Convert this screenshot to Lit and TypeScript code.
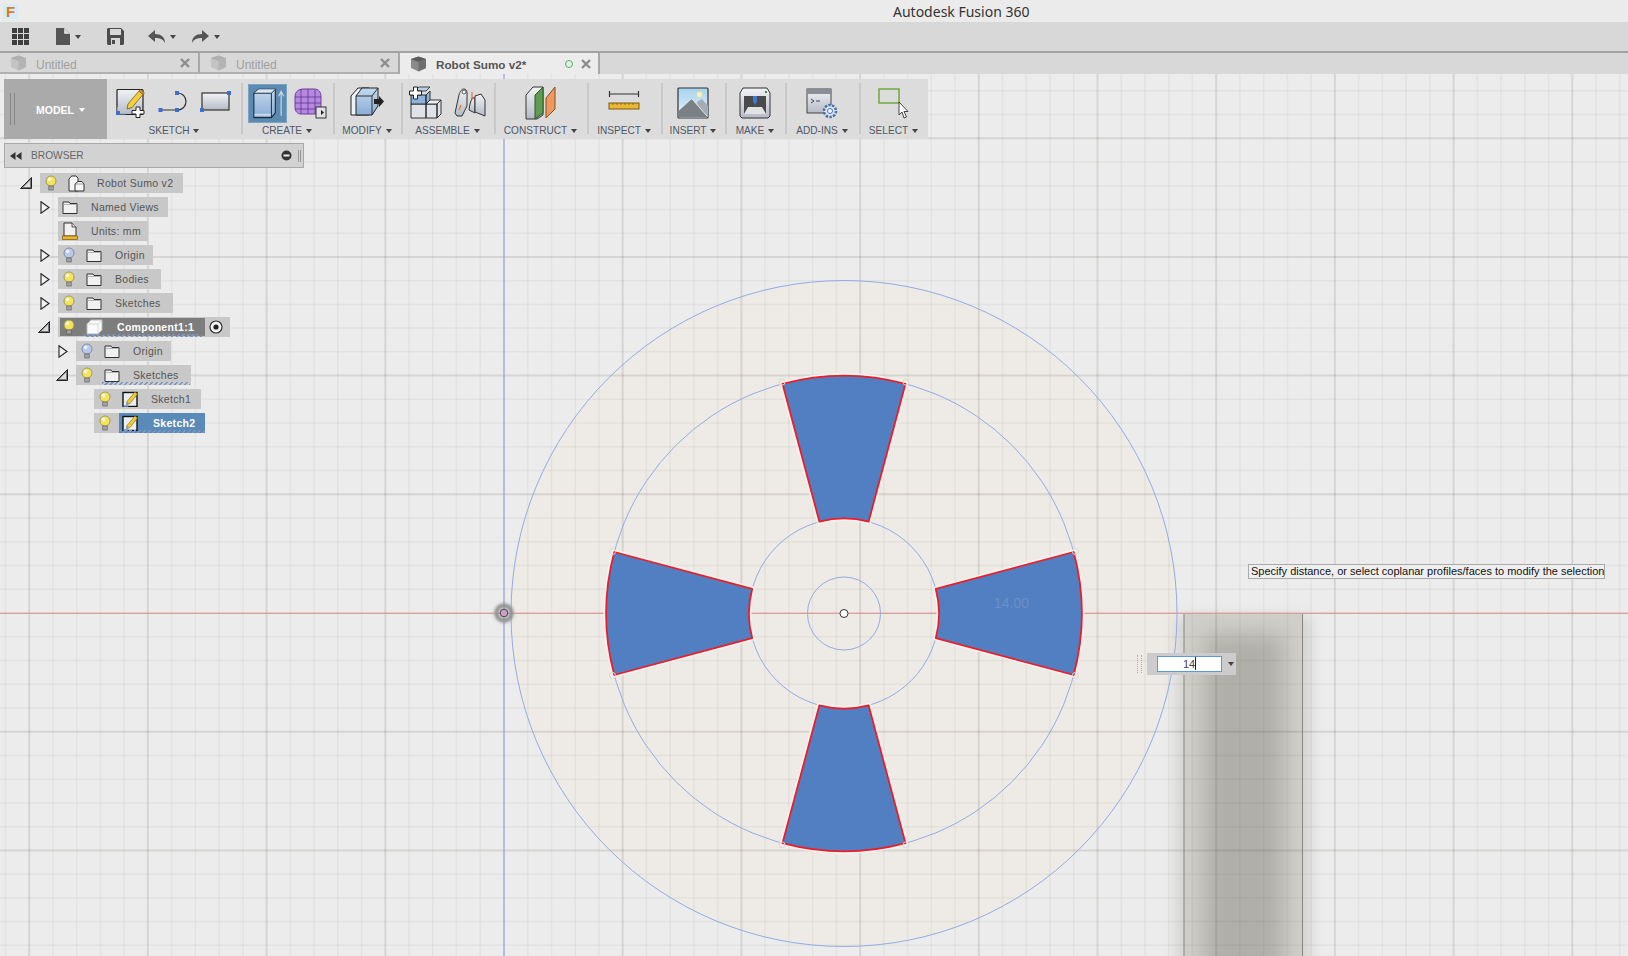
import { LitElement, css, html, svg } from 'lit';
import { customElement } from 'lit/decorators.js';

const CX = 844;
const CY = 613.5;
const STEP = 23.74;

// sector of the ring between the two sketch circles, opening 30deg, pointing up
const sector = 'M-61.5 -229.7 A237.8 237.8 0 0 1 61.5 -229.7 L24.6 -91.8 A95 95 0 0 0 -24.6 -91.8 Z';

const gridLines = () => {
  const out = [];
  for (let i = -21; i < 48; i++) {
    const x = 504 + i * STEP;
    const major = i % 5 === 0;
    out.push(svg`<line class=${major ? 'maj' : 'min'} x1=${x} x2=${x} y1="74" y2="956"></line>`);
  }
  for (let i = -23; i < 15; i++) {
    const y = 613 + i * STEP;
    const major = i % 5 === 0;
    out.push(svg`<line class=${major ? 'maj' : 'min'} x1="0" x2="1628" y1=${y} y2=${y}></line>`);
  }
  return out;
};

const caret = html`<span class="caret"></span>`;

const bulb = (on: boolean) => html`<svg class="bulb" width="12" height="17" viewBox="0 0 12 17">
  <circle cx="6" cy="6" r="5" fill=${on ? '#f7e35a' : '#b9c9ee'} stroke=${on ? '#8f8a55' : '#6f7d9e'} stroke-width="0.8"></circle>
  <circle cx="4.6" cy="4.4" r="1.8" fill="#fff" opacity=".75"></circle>
  <rect x="3.8" y="11" width="4.4" height="4" fill="#a4a4a4" stroke="#555" stroke-width=".6"></rect>
</svg>`;

const folder = html`<svg class="ic" width="16" height="15" viewBox="0 0 16 15">
  <path d="M1 13.500V2h6l1 1.500h7v10Z" fill="#f1f1f1" stroke="#333" stroke-width="1"></path>
  <path d="M1 4.500h14" stroke="#999" stroke-width=".7"></path>
</svg>`;

const units = html`<svg class="ic" width="16" height="18" viewBox="0 0 16 18">
  <path d="M2 14V1h8l4 4v9Z" fill="#f1f1f1" stroke="#333"></path>
  <path d="M10 1v4h4" fill="#ddd" stroke="#333" stroke-width=".8"></path>
  <rect x="0.5" y="14" width="15" height="3.500" fill="#e9b52b" stroke="#8a6510" stroke-width=".8"></rect>
</svg>`;

const assembly = html`<svg class="ic" width="17" height="17" viewBox="0 0 17 17">
  <path d="M1 16V4L3.500 1H8L10 3V16Z" fill="#f6f6f6" stroke="#333"></path>
  <path d="M7 16V9L10 6.500H14L16 9V16Z" fill="#f6f6f6" stroke="#333"></path>
  <path d="M7 9H16" stroke="#777" stroke-width=".7"></path>
</svg>`;

const part = html`<svg class="ic" width="17" height="16" viewBox="0 0 17 16">
  <path d="M1 15V5l4-4h11v10l-4 4Z" fill="#fafafa" stroke="#bbb"></path>
  <path d="M1 5h11v10M12 5l4-4" fill="none" stroke="#ccc" stroke-width=".8"></path>
</svg>`;

const sketchIc = html`<svg class="ic" width="17" height="16" viewBox="0 0 17 16">
  <rect x="1" y="1.500" width="14" height="14" fill="#e8edf5" stroke="#111" stroke-width="1.400"></rect>
  <path d="M5 10.500 13 1l2.500 2L8 12.500l-3.500 1Z" fill="#f2c92e" stroke="#7a6414" stroke-width=".6"></path>
  <path d="M1.500 15h4v-4" fill="none" stroke="#6fa3dc" stroke-width="1.400"></path>
</svg>`;

const radio = html`<svg class="radio" width="14" height="14" viewBox="0 0 14 14">
  <circle cx="7" cy="7" r="6" fill="#f4f4f4" stroke="#333" stroke-width="1.200"></circle>
  <circle cx="7" cy="7" r="2.600" fill="#222"></circle>
</svg>`;

interface Row {
  depth: number;
  twist?: 'open' | 'closed';
  light?: 'on' | 'off';
  icon: unknown;
  label: string;
  kind?: 'active' | 'selected';
  hatch?: boolean;
  width: number;
}

const rows: Row[] = [
  { depth: 0, twist: 'open', light: 'on', icon: assembly, label: 'Robot Sumo v2', width: 143 },
  { depth: 1, twist: 'closed', icon: folder, label: 'Named Views', width: 110 },
  { depth: 1, icon: units, label: 'Units: mm', width: 90 },
  { depth: 1, twist: 'closed', light: 'off', icon: folder, label: 'Origin', width: 95 },
  { depth: 1, twist: 'closed', light: 'on', icon: folder, label: 'Bodies', width: 103 },
  { depth: 1, twist: 'closed', light: 'on', icon: folder, label: 'Sketches', width: 115 },
  { depth: 1, twist: 'open', light: 'on', icon: part, label: 'Component1:1', kind: 'active', width: 172 },
  { depth: 2, twist: 'closed', light: 'off', icon: folder, label: 'Origin', width: 95 },
  { depth: 2, twist: 'open', light: 'on', icon: folder, label: 'Sketches', hatch: true, width: 115 },
  { depth: 3, light: 'on', icon: sketchIc, label: 'Sketch1', width: 107 },
  { depth: 3, light: 'on', icon: sketchIc, label: 'Sketch2', kind: 'selected', width: 111 },
];

const sketchNew = html`<svg width="34" height="32" viewBox="0 0 34 32">
  <rect x="2" y="2.500" width="26" height="25" rx="1" fill="url(#sheet)" stroke="#222" stroke-width="1.200"></rect>
  <path d="M13 17 24 4l4 3.500-11 13-5 1.500Z" fill="#f4cf3c" stroke="#6e5a12" stroke-width=".8"></path>
  <path d="M24 4l1.500-1.500 4 3.500L28 7.500Z" fill="#e98d3a" stroke="#6e5a12" stroke-width=".6"></path>
  <path d="M2.500 27h8M2.500 27v-7" stroke="#7aa5dc" stroke-width="1"></path>
  <rect x="1" y="24" width="4" height="4" fill="#3f6fc9"></rect>
  <path d="M21 20h4v3.500h4V27h-4v3.500h-4V27h-4v-3.500h4Z" fill="#fff" stroke="#222"></path>
</svg>`;

const sketchLine = html`<svg width="34" height="32" viewBox="0 0 34 32">
  <path d="M4 23H20M20 6C32 6 32 23 20 23" fill="none" stroke="#333" stroke-width="1.200"></path>
  <rect x="1.500" y="21" width="4" height="4" fill="#3b6fd0"></rect>
  <rect x="18" y="21" width="4" height="4" fill="#3b6fd0"></rect>
  <rect x="18" y="4" width="4" height="4" fill="#3b6fd0"></rect>
</svg>`;

const sketchRect = html`<svg width="34" height="32" viewBox="0 0 34 32">
  <rect x="3" y="6" width="27" height="17" fill="url(#sheet)" stroke="#333" stroke-width="1.200"></rect>
  <rect x="28" y="4" width="4" height="4" fill="#3b6fd0"></rect>
  <rect x="1" y="21" width="4" height="4" fill="#3b6fd0"></rect>
</svg>`;

const boxExtrude = html`<svg width="38" height="38" viewBox="0 0 38 38">
  <path d="M5 9 10 5H27V29L23 34H5Z" fill="url(#face)" stroke="#1d2a3a" stroke-width="1.100"></path>
  <path d="M5 9 10 5H27L23 9Z" fill="#d8e6f4"></path>
  <path d="M5 9H23V34M23 9 27 5" fill="none" stroke="#1d2a3a" stroke-width="1"></path>
  <path d="M5.500 31H22.500" stroke="#fff" stroke-width="1.600" opacity=".6"></path>
  <path d="M33 32V8M30.500 12 33 7l2.500 5" fill="none" stroke="#cfd8e2" stroke-width="1.200"></path>
</svg>`;

const meshBox = html`<svg width="34" height="34" viewBox="0 0 34 34">
  <path d="M2 11C2 5 6 3 11 3H21C26 3 28 6 28 11V23C28 26 25 28 21 28H8C4 28 2 25 2 21Z" fill="#b688e0" stroke="#6b3f9e" stroke-width="1"></path>
  <path d="M8 3V28M15 3V28M22 4V28M2 11H28M2 17H28M2 23H28" stroke="#5e358e" stroke-width=".8" fill="none"></path>
  <rect x="23" y="21" width="10" height="11" fill="#e2e2e2" stroke="#333"></rect>
  <path d="M25 26.500h3V24l3 2.500-3 2.500v-2.500h-3Z" fill="#222"></path>
</svg>`;

const pressPull = html`<svg width="34" height="34" viewBox="0 0 34 34">
  <path d="M1 29V10L8 2H19V29Z" fill="#eef1f5" stroke="#222"></path>
  <path d="M6 29V10L12 2H28V20L22 29Z" fill="url(#face)" stroke="#222"></path>
  <path d="M6 10H22V29M22 10 28 2" fill="none" stroke="#222" stroke-width=".9"></path>
  <path d="M24 13h5v-3l5 5.500-5 5.500v-3h-5Z" fill="#222"></path>
</svg>`;

const assembleNew = html`<svg width="34" height="34" viewBox="0 0 34 34">
  <path d="M2 18H17V32H2ZM17 18H28V32H17ZM28 32 32 28V14L28 18Z" fill="#dfe2e7" stroke="#222" stroke-width=".9"></path>
  <path d="M17 18 21 14H32L28 18Z" fill="#eef0f3" stroke="#222" stroke-width=".9"></path>
  <path d="M2 18V9H17V18ZM17 18 21 14V5L17 9Z" fill="#8db2dc" stroke="#222" stroke-width=".9"></path>
  <path d="M6 5 10 1H21L17 5Z" fill="#b9d0ea" stroke="#222" stroke-width=".8"></path>
  <path d="M4.500 1h4v4h4v4h-4v4h-4V9h-4V5h4Z" fill="#fff" stroke="#222"></path>
</svg>`;

const joint = html`<svg width="34" height="34" viewBox="0 0 34 34">
  <path d="M2 27 6 9C7 5 9 3 11 3 13 3 14 5 14 7V20L9 30 4 30Z" fill="url(#sheet)" stroke="#333"></path>
  <circle cx="11" cy="6" r="2" fill="#fff" stroke="#333" stroke-width=".8"></circle>
  <path d="M17 18 19 12H22V27L16 24Z" fill="url(#sheet)" stroke="#333"></path>
  <path d="M22 10 28 8 32 14V30L27 28 22 26Z" fill="url(#sheet)" stroke="#333"></path>
  <path d="M19 6V14M6 24l2-5" stroke="#e7762b" stroke-width="1.200"></path>
</svg>`;

const construct = html`<svg width="34" height="34" viewBox="0 0 34 34">
  <path d="M2 9 9 1H19V29L13 33H2Z" fill="url(#sheet)" stroke="#333"></path>
  <path d="M11 33V9L19 1V27Z" fill="#5f9b52" stroke="#2e5a26"></path>
  <path d="M22 32V12L31 1V23Z" fill="#ee995c" stroke="#8c4c1e"></path>
</svg>`;

const inspect = html`<svg width="34" height="30" viewBox="0 0 34 30">
  <path d="M2.500 3V9M31.500 3V9M2.500 6H31.500" fill="none" stroke="#333" stroke-width="1.200"></path>
  <rect x="2" y="15" width="30" height="6" fill="#e9b733" stroke="#7a5c13"></rect>
  <path d="M6 15v2M10 15v2M14 15v2M18 15v2M22 15v2M26 15v2" stroke="#7a5c13" stroke-width=".8"></path>
</svg>`;

const insertPic = html`<svg width="32" height="32" viewBox="0 0 32 32">
  <rect x="1" y="1" width="30" height="30" rx="1" fill="url(#sky)" stroke="#333" stroke-width="1.200"></rect>
  <rect x="20" y="5" width="5" height="5" fill="#fbf2b4" stroke="#e8dc9c" stroke-width=".6"></rect>
  <path d="M20 15 25 12 31 19V30H22Z" fill="#a4adb7"></path>
  <path d="M1.500 30V24L15 12 30 29V30Z" fill="#7b7f86"></path>
  <path d="M15 12 30 29" stroke="#e6e6e6" stroke-width="1"></path>
</svg>`;

const makePrinter = html`<svg width="32" height="32" viewBox="0 0 32 32">
  <path d="M1 6 4 1H28L31 6V29L29 31H3L1 29Z" fill="url(#sheet)" stroke="#333"></path>
  <rect x="5" y="9" width="22" height="18" fill="#4a4a4a"></rect>
  <path d="M14 9H18V15L16 18 14 15Z" fill="#3f78d0"></path>
  <path d="M5 27 9 20H23L27 27Z" fill="#e2e2e2"></path>
  <rect x="26" y="4" width="2" height="2" fill="#1c9c3c"></rect>
</svg>`;

const addins = html`<svg width="32" height="32" viewBox="0 0 32 32">
  <rect x="1" y="2" width="24" height="24" fill="url(#sheet)" stroke="#444"></rect>
  <rect x="1" y="2" width="24" height="5" fill="#8a8e95"></rect>
  <path d="M5 12l3 2-3 2M10 14h4" stroke="#333" fill="none" stroke-width=".9"></path>
  <circle cx="24" cy="24" r="6" fill="#dbe6f6" stroke="#4a6fa8" stroke-width="2.500" stroke-dasharray="2.400 1.300"></circle>
  <circle cx="24" cy="24" r="2.500" fill="#f3f7fd" stroke="#4a6fa8" stroke-width="1"></circle>
</svg>`;

const selectBox = html`<svg width="34" height="32" viewBox="0 0 34 32">
  <rect x="2" y="2" width="20" height="14" fill="none" stroke="#6aa334" stroke-width="1.400"></rect>
  <path d="M22 15V28L25 25 27 31 29.500 30 27 24.500H31Z" fill="#fff" stroke="#333" stroke-width=".9"></path>
</svg>`;

const groups = [
  { label: 'SKETCH', width: 134, gap: 8, icons: [sketchNew, sketchLine, sketchRect] },
  { label: 'CREATE', width: 92, gap: 6, icons: [html`<span class="pressed">${boxExtrude}</span>`, meshBox] },
  { label: 'MODIFY', width: 68, gap: 0, icons: [pressPull] },
  { label: 'ASSEMBLE', width: 93, gap: 10, icons: [assembleNew, joint] },
  { label: 'CONSTRUCT', width: 93, gap: 0, icons: [construct] },
  { label: 'INSPECT', width: 74, gap: 0, icons: [inspect] },
  { label: 'INSERT', width: 64, gap: 0, icons: [insertPic] },
  { label: 'MAKE', width: 60, gap: 0, icons: [makePrinter] },
  { label: 'ADD-INS', width: 74, gap: 0, icons: [addins] },
  { label: 'SELECT', width: 69, gap: 0, icons: [selectBox] },
];

const cube = (dark: boolean) => html`<svg class="cube" width="17" height="16" viewBox="0 0 17 16">
  <path d="M1 3 8.500 0.500 16 3V12L8.500 15.500 1 12Z" fill=${dark ? '#8a8a8a' : '#c4c4c4'}></path>
  <path d="M1 3 8.500 6 16 3 8.500 0.500Z" fill=${dark ? '#5c5c5c' : '#aeaeae'}></path>
  <path d="M8.500 6V15.500L16 12V3Z" fill=${dark ? '#6f6f6f' : '#b4b4b4'}></path>
</svg>`;

const closeX = html`<svg class="x" width="10" height="10" viewBox="0 0 10 10">
  <path d="M1 1 9 9M9 1 1 9" stroke="#8d8d8d" stroke-width="2.400"></path>
</svg>`;

@customElement('app-root')
export class AppRoot extends LitElement {
  static styles = css`
    :host {
      display: flex;
      flex-direction: column;
      width: 1628px;
      height: 956px;
      overflow: hidden;
      background: #ececec;
      font-family: 'Liberation Sans', Arial, sans-serif;
      color: #555;
    }
    .defs { position: absolute; width: 0; height: 0; }

    .title {
      height: 22px;
      flex: none;
      background: #ebebeb;
      display: flex;
      align-items: center;
    }
    .logo {
      width: 15px;
      height: 15px;
      margin-left: 3px;
      background: #d5ecf7;
      color: #d9792a;
      font: bold 15px/15px 'Liberation Sans', sans-serif;
      text-align: center;
    }
    .title h1 {
      margin: 0 0 0 875px;
      font: 400 14px 'Noto Sans', sans-serif;
      color: #333;
    }

    .quick {
      height: 29px;
      flex: none;
      background: #d8d8d8;
      display: flex;
      align-items: center;
      padding-left: 12px;
      border-bottom: 2px solid #a2a2a2;
    }
    .quick svg { flex: none; }
    .caret {
      display: inline-block;
      width: 0;
      height: 0;
      border-left: 3.500px solid transparent;
      border-right: 3.500px solid transparent;
      border-top: 4px solid #444;
    }
    .file { margin-left: 27px; }
    .quick .caret { margin-left: 5px; }
    .save { margin-left: 26px; }
    .undo { margin-left: 24px; }
    .redo { margin-left: 16px; }

    .tabs {
      height: 21px;
      flex: none;
      display: flex;
      background: #d8d8d8;
      font-size: 12px;
    }
    .tab {
      width: 200px;
      flex: none;
      display: flex;
      align-items: center;
      padding: 0 8px 0 10px;
      box-sizing: border-box;
      border-right: 2px solid #a8a8a8;
      border-bottom: 2px solid #b0b0b0;
      color: #a0a0a0;
    }
    .tab span { margin: 5px 0 0 9px; flex: 1; }
    .tab.on {
      background: #ececec;
      color: #555;
      font-size: 11.700px;
      font-weight: bold;
      border-bottom: none;
      padding-right: 7px;
    }
    .tab.on span { margin-top: 2px; }
    .dot {
      width: 8px;
      height: 8px;
      border-radius: 50%;
      border: 1px solid #4fae6a;
      box-sizing: border-box;
      margin-right: 8px;
    }

    .canvas {
      flex: 1;
      position: relative;
      min-height: 0;
    }
    .scene {
      position: absolute;
      inset: 0;
      width: 1628px;
      height: 882px;
    }
    .min { stroke: rgba(60, 50, 40, 0.05); stroke-width: 1.500; }
    .maj { stroke: rgba(60, 50, 40, 0.12); stroke-width: 2; }

    .toolbar {
      position: absolute;
      left: 4px;
      top: 5px;
      display: flex;
      height: 60px;
      background: #dcdcdc;
    }
    .model {
      width: 103px;
      background: #aaaaaa;
      color: #fff;
      font-size: 10.500px;
      font-weight: bold;
      display: flex;
      align-items: center;
      box-sizing: border-box;
      padding: 2px 0 0 32px;
      gap: 5px;
      position: relative;
    }
    .model::before {
      content: '';
      position: absolute;
      left: 6px;
      top: 14px;
      bottom: 14px;
      width: 3px;
      border-left: 1px solid #888;
      border-right: 1px solid #888;
    }
    .model .caret { border-top-color: #fff; }
    .group {
      flex: none;
      box-sizing: border-box;
      display: flex;
      flex-direction: column;
      align-items: center;
      padding-top: 4px;
      position: relative;
    }
    .group + .group::before {
      content: '';
      position: absolute;
      left: 0;
      top: 4px;
      bottom: 5px;
      width: 2px;
      background: #c9c9c9;
    }
    .icons {
      height: 40px;
      display: flex;
      align-items: center;
      justify-content: center;
    }
    .pressed {
      display: flex;
      width: 39px;
      height: 39px;
      align-items: center;
      justify-content: center;
      background: #5c8bb2;
      border: 1px solid #7ba3c4;
      box-sizing: border-box;
    }
    .glabel {
      display: flex;
      align-items: center;
      gap: 4px;
      font-size: 10.100px;
      color: #4f5768;
      margin-top: 2px;
      white-space: nowrap;
    }

    .browser {
      position: absolute;
      left: 4px;
      top: 69px;
      width: 300px;
    }
    .bhead {
      height: 25px;
      box-sizing: border-box;
      display: flex;
      align-items: center;
      background: #d2d2d2;
      border: 1px solid #a8a8a8;
      padding: 0 2px 0 5px;
      color: #666;
      font-size: 10.200px;
    }
    .bhead .name { margin-left: 9px; flex: 1; }
    .grip2 { margin-left: 6px; }
    .tree {
      display: flex;
      flex-direction: column;
      gap: 4px;
      margin-top: 5px;
      font-size: 10.500px;
      letter-spacing: 0.300px;
    }
    .row { display: flex; align-items: center; height: 20px; }
    .twist { width: 23px; flex: none; display: flex; padding-left: 3px; box-sizing: border-box; }
    .twist .closed { margin-left: 2px; }
    .pill {
      height: 20px;
      background: #c8c8c8;
      display: flex;
      align-items: center;
      box-sizing: border-box;
      padding-left: 4px;
      white-space: nowrap;
      position: relative;
      flex: none;
    }
    .bulbslot { width: 24px; flex: none; display: flex; padding-left: 1px; box-sizing: border-box; }
    .icslot { width: 29px; flex: none; display: flex; }
    .pill.active .fill {
      position: absolute;
      left: 2px;
      top: 1px;
      bottom: 1px;
      width: 145px;
      background: #7d7d7d;
    }
    .pill.selected .fill {
      position: absolute;
      left: 25px;
      top: 0;
      bottom: 0;
      right: 0;
      background: #5a8ab8;
    }
    .pill > *:not(.fill) { position: relative; }
    .pill.active .text, .pill.selected .text { color: #fff; font-weight: bold; margin-left: 2px; }
    .hatch::after {
      content: '';
      position: absolute;
      left: 26px;
      bottom: 0;
      height: 3px;
      background: repeating-linear-gradient(135deg, #7d96c4 0 1.500px, transparent 1.500px 3.500px);
    }
    .hatch.active::after { width: 118px; }
    .hatch.plain::after { width: 88px; }
    .hatch.selected::after { width: 85px; }
    .radio { position: absolute !important; right: 7px; top: 3px; }

    .tip {
      position: absolute;
      left: 1248px;
      top: 490px;
      height: 15px;
      width: 357px;
      box-sizing: border-box;
      background: #efefef;
      border: 1px solid #aaa;
      color: #111;
      font-size: 11px;
      line-height: 13px;
      padding-left: 2px;
      white-space: nowrap;
    }
    .dim {
      position: absolute;
      left: 1147px;
      top: 579px;
      width: 89px;
      height: 22px;
      box-sizing: border-box;
      background: #cccccc;
      display: flex;
      align-items: center;
      padding-left: 10px;
    }
    .dim .grip {
      position: absolute;
      left: -10px;
      top: 2px;
      bottom: 2px;
      width: 3px;
      border-left: 1px dotted #b0b0b0;
      border-right: 1px dotted #b0b0b0;
    }
    .dim .field {
      width: 65px;
      height: 16px;
      box-sizing: border-box;
      background: #fff;
      border: 1px solid #5b9bd5;
      font-size: 11px;
      line-height: 14px;
      color: #444;
      padding-left: 25px;
    }
    .dim .field i {
      display: inline-block;
      width: 1px;
      height: 13px;
      background: #222;
      vertical-align: -2px;
    }
    .dim .caret { margin-left: 6px; }
  `;

  render() {
    return html`
      <svg class="defs">
        <defs>
          <linearGradient id="sheet" x1="0" y1="0" x2="0" y2="1">
            <stop offset="0" stop-color="#f2f3f6"></stop>
            <stop offset="1" stop-color="#b4bac6"></stop>
          </linearGradient>
          <linearGradient id="face" x1="0" y1="0" x2="0" y2="1">
            <stop offset="0" stop-color="#c5d9ee"></stop>
            <stop offset="1" stop-color="#88acd6"></stop>
          </linearGradient>
          <linearGradient id="sky" x1="0" y1="0" x2="0" y2="1">
            <stop offset="0" stop-color="#a6d2ee"></stop>
            <stop offset="1" stop-color="#eaf4fa"></stop>
          </linearGradient>
          <clipPath id="bodyclip">
            <rect x="1184" y="613.500" width="119" height="343"></rect>
          </clipPath>
          <filter id="soft" x="-30%" y="-10%" width="160%" height="120%">
            <feGaussianBlur stdDeviation="7"></feGaussianBlur>
          </filter>
          <filter id="softer" x="-50%" y="-20%" width="200%" height="140%">
            <feGaussianBlur stdDeviation="11"></feGaussianBlur>
          </filter>
          <filter id="glow" x="-60%" y="-60%" width="220%" height="220%">
            <feGaussianBlur stdDeviation="1.500"></feGaussianBlur>
          </filter>
        </defs>
      </svg>

      <div class="title">
        <div class="logo">F</div>
        <h1>Autodesk Fusion 360</h1>
      </div>

      <div class="quick">
        <svg width="17" height="17" viewBox="0 0 17 17" fill="#3f3f3f">
          <path d="M0 0h5v5H0ZM6 0h5v5H6ZM12 0h5v5h-5ZM0 6h5v5H0ZM6 6h5v5H6ZM12 6h5v5h-5ZM0 12h5v5H0ZM6 12h5v5H6ZM12 12h5v5h-5Z"></path>
        </svg>
        <svg class="file" width="14" height="17" viewBox="0 0 14 17">
          <path d="M0 0H8L14 6V17H0Z" fill="#555"></path>
          <path d="M8.500 0.500V5.500H13.500" fill="#ddd" stroke="#d8d8d8" stroke-width=".8"></path>
        </svg>
        ${caret}
        <svg class="save" width="17" height="17" viewBox="0 0 17 17">
          <path d="M1 0H14L17 3V16L16 17H1L0 16V1Z" fill="#4c4c4c"></path>
          <rect x="3" y="1" width="11" height="6" fill="#d8d8d8"></rect>
          <rect x="4" y="10" width="9" height="7" fill="#d8d8d8"></rect>
          <rect x="5" y="12" width="3" height="4" fill="#4c4c4c"></rect>
        </svg>
        <svg class="undo" width="17" height="14" viewBox="0 0 17 14">
          <path d="M7 0V4C13 4 17 7 17 13 15 9 12 8 7 8V12L0 6Z" fill="#555"></path>
        </svg>
        ${caret}
        <svg class="redo" width="17" height="14" viewBox="0 0 17 14">
          <path d="M10 0V4C4 4 0 7 0 13 2 9 5 8 10 8V12L17 6Z" fill="#555"></path>
        </svg>
        ${caret}
      </div>

      <div class="tabs">
        <div class="tab">${cube(false)}<span>Untitled</span>${closeX}</div>
        <div class="tab">${cube(false)}<span>Untitled</span>${closeX}</div>
        <div class="tab on">${cube(true)}<span>Robot Sumo v2*</span><div class="dot"></div>${closeX}</div>
      </div>

      <div class="canvas">
        <svg class="scene" viewBox="0 74 1628 882">
          <circle cx=${CX} cy=${CY} r="333" fill="#eeeae5"></circle>
          <rect x="1176" y="616" width="135" height="370" fill="#b4b4b0" opacity=".45" filter="url(#soft)"></rect>
          <g clip-path="url(#bodyclip)">
            <rect x="1184" y="613.500" width="119" height="343" fill="#d0cfca"></rect>
            <rect x="1204" y="634" width="80" height="360" fill="#b0afa9" filter="url(#softer)"></rect>
          </g>
          ${gridLines()}
          <path d="M1184 956V613.500H1302.500V956" fill="none" stroke="#8a8581" stroke-width="1"></path>
          <line x1="0" x2="1628" y1=${CY} y2=${CY} stroke="#e99a94" stroke-width="1"></line>
          <line x1="504" x2="504" y1="74" y2="956" stroke="#9aa0ec" stroke-width="1"></line>
          <circle cx=${CX} cy=${CY} r="333" fill="none" stroke="#94abe6" stroke-width="1"></circle>
          <circle cx=${CX} cy=${CY} r="237.800" fill="none" stroke="#94abe6" stroke-width="1"></circle>
          <circle cx=${CX} cy=${CY} r="95" fill="none" stroke="#94abe6" stroke-width="1"></circle>
          <circle cx=${CX} cy=${CY} r="36.500" fill="none" stroke="#94abe6" stroke-width="1"></circle>
          ${[0, 90, 180, 270].map(
            a => svg`<g transform="translate(${CX} ${CY}) rotate(${a})">
              <path d=${sector} fill="#517fc1" stroke="#f6f3f0" stroke-width="5" stroke-linejoin="round"></path>
              <path d=${sector} fill="#517fc1" stroke="#f01c25" stroke-width="1.800" stroke-linejoin="round"></path>
            </g>`,
          )}
          ${[15, 75, 105, 165, 195, 255, 285, 345].map(a => {
            const t = ((a - 90) * Math.PI) / 180;
            return svg`<circle cx=${CX + 239.5 * Math.cos(t)} cy=${CY + 239.5 * Math.sin(t)} r="3" fill="none" stroke="#dcdad6" stroke-width="1"></circle>`;
          })}
          <text x="994" y="608" font-family="Liberation Sans, sans-serif" font-size="14" fill="#6a8fc8">14.00</text>
          <circle cx=${CX} cy=${CY} r="4" fill="#fff" stroke="#333" stroke-width="1"></circle>
          <circle cx="504" cy="613" r="7.500" fill="none" stroke="#8e8e8e" stroke-width="4.500" filter="url(#glow)"></circle>
          <circle cx="504" cy="613" r="3.800" fill="#cf9ec6" stroke="#444" stroke-width="1"></circle>
        </svg>

        <div class="toolbar">
          <div class="model">MODEL ${caret}</div>
          ${groups.map(
            g => html`<div class="group" style="width:${g.width}px">
              <div class="icons" style="gap:${g.gap}px">${g.icons}</div>
              <div class="glabel">${g.label} ${caret}</div>
            </div>`,
          )}
        </div>

        <div class="browser">
          <div class="bhead">
            <svg width="12" height="8" viewBox="0 0 12 8" fill="#333"><path d="M5.500 0V8L0 4ZM11.500 0V8L6 4Z"></path></svg>
            <span class="name">BROWSER</span>
            <svg width="11" height="11" viewBox="0 0 11 11"><circle cx="5.500" cy="5.500" r="5" fill="#333"></circle><rect x="2.500" y="4.500" width="6" height="2" fill="#eee"></rect></svg>
            <svg class="grip2" width="3" height="12" viewBox="0 0 3 12"><path d="M.5 0V12M2.500 0V12" stroke="#999"></path></svg>
          </div>
          <div class="tree">${rows.map(r => this.renderRow(r))}</div>
        </div>

        <div class="tip">Specify distance, or select coplanar profiles/faces to modify the selection</div>

        <div class="dim">
          <div class="grip"></div>
          <div class="field">14<i></i></div>
          ${caret}
        </div>
      </div>
    `;
  }

  renderRow(r: Row) {
    const hatchClass = r.hatch ? 'hatch plain' : r.kind ? `hatch ${r.kind}` : '';
    return html`<div class="row" style="padding-left:${r.depth === 0 ? 13 : 31 + (r.depth - 1) * 18}px">
      <div class="twist">${this.renderTwist(r.twist)}</div>
      <div class="pill ${r.kind ?? ''} ${hatchClass}" style="width:${r.width}px">
        ${r.kind ? html`<div class="fill"></div>` : ''}
        ${r.light ? html`<div class="bulbslot">${bulb(r.light === 'on')}</div>` : ''}
        <div class="icslot">${r.icon}</div>
        <span class="text">${r.label}</span>
        ${r.kind === 'active' ? radio : ''}
      </div>
    </div>`;
  }

  renderTwist(t?: 'open' | 'closed') {
    if (t === 'open') {
      return html`<svg width="12" height="12" viewBox="0 0 12 12"><path d="M.5 11.500H11.500V.5Z" fill="#777" stroke="#222"></path><path d="M3.500 10H10V3.500Z" fill="#ddd"></path></svg>`;
    }
    if (t === 'closed') {
      return html`<svg class="closed" width="10" height="13" viewBox="0 0 10 13"><path d="M1 .8 9 6.500 1 12.200Z" fill="#f2f2f2" stroke="#222" stroke-width="1.100"></path></svg>`;
    }
    return '';
  }
}
